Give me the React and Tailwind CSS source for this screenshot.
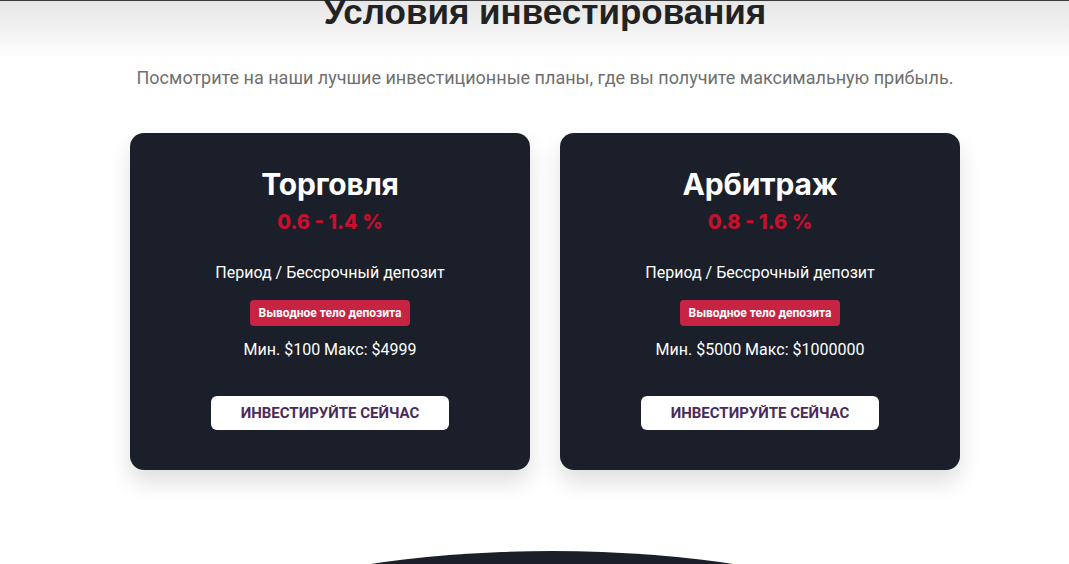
import React from "react";

const plans = [
  { title: "Торговля", rate: "0.6 - 1.4 %", limits: "Мин. $100 Макс: $4999" },
  { title: "Арбитраж", rate: "0.8 - 1.6 %", limits: "Мин. $5000 Макс: $1000000" },
];

function PlanCard({ title, rate, limits }) {
  return (
    <div className="w-[400px] rounded-[14px] bg-[#1b1f29] pt-[33px] pb-[40px] flex flex-col items-center text-center shadow-[0_12px_22px_rgba(0,0,0,0.13)]">
      <h3 className="font-['Inter',sans-serif] font-bold text-[30px] leading-[36px] text-white tracking-[-0.2px]">
        {title}
      </h3>
      <div className="mt-[6px] font-['Inter',sans-serif] font-extrabold text-[20px] leading-[28px] text-[#c8102e]">
        {rate}
      </div>
      <p className="mt-[25px] font-['Roboto',sans-serif] text-[16px] leading-[24px] text-white">
        Период / Бессрочный депозит
      </p>
      <span className="mt-[15px] h-[26px] px-[8px] rounded-[4px] bg-[#c72443] flex items-center font-['Roboto',sans-serif] font-bold text-[12px] text-white">
        Выводное тело депозита
      </span>
      <p className="mt-[12px] font-['Roboto',sans-serif] text-[16px] leading-[24px] text-white">
        {limits}
      </p>
      <button className="mt-[34px] w-[238px] h-[34px] rounded-[6px] bg-white flex items-center justify-center font-['Roboto',sans-serif] font-bold text-[15px] uppercase text-[#4a2b5c]">
        Инвестируйте сейчас
      </button>
    </div>
  );
}

export default function App() {
  return (
    <div className="relative w-[1069px] h-[564px] overflow-hidden bg-white">
      <div className="border-t border-[#3a3a3a] bg-gradient-to-b from-[#e6e6e6] to-white h-[60px]" />
      <div className="-mt-[61px] w-[830px] ml-[130px] flex flex-col items-center">
        <h2 className="-mt-[7px] font-['Liberation_Sans',Arial,sans-serif] font-bold text-[35px] leading-[40px] text-[#222]">
          Условия инвестирования
        </h2>
        <p className="mt-[32px] font-['Roboto',sans-serif] text-[18px] leading-[28px] text-[#6f6f6f] whitespace-nowrap">
          Посмотрите на наши лучшие инвестиционные планы, где вы получите максимальную прибыль.
        </p>
        <div className="mt-[41px] flex gap-[30px]">
          {plans.map((p) => (
            <PlanCard key={p.title} {...p} />
          ))}
        </div>
      </div>
      {/* dark arc of the next section peeking in */}
      <svg className="mt-[79px] block" width="1069" height="30" viewBox="0 0 1069 30">
        <ellipse cx="552" cy="202" rx="510" ry="200" fill="#1b1f29" />
      </svg>
    </div>
  );
}
